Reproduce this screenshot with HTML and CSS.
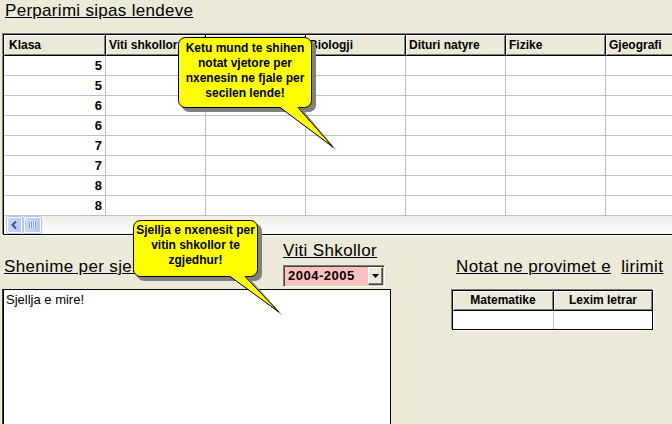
FILE: index.html
```html
<!DOCTYPE html>
<html>
<head>
<meta charset="utf-8">
<link rel="stylesheet" href="styles.css">
</head>
<body>
<div class="page">
  <h1 class="title">Perparimi sipas lendeve</h1>

  <div class="grid">
    <div class="row head">
      <div class="hc k">Klasa</div>
      <div class="hc">Viti shkollor</div>
      <div class="hc">Matematike</div>
      <div class="hc">Biologji</div>
      <div class="hc">Dituri natyre</div>
      <div class="hc">Fizike</div>
      <div class="hc">Gjeografi</div>
      <div class="hc">Histori</div>
    </div>
    <div class="row"><div class="cell k">5</div><div class="cell"></div><div class="cell"></div><div class="cell"></div><div class="cell"></div><div class="cell"></div><div class="cell"></div><div class="cell"></div></div>
    <div class="row"><div class="cell k">5</div><div class="cell"></div><div class="cell"></div><div class="cell"></div><div class="cell"></div><div class="cell"></div><div class="cell"></div><div class="cell"></div></div>
    <div class="row"><div class="cell k">6</div><div class="cell"></div><div class="cell"></div><div class="cell"></div><div class="cell"></div><div class="cell"></div><div class="cell"></div><div class="cell"></div></div>
    <div class="row"><div class="cell k">6</div><div class="cell"></div><div class="cell"></div><div class="cell"></div><div class="cell"></div><div class="cell"></div><div class="cell"></div><div class="cell"></div></div>
    <div class="row"><div class="cell k">7</div><div class="cell"></div><div class="cell"></div><div class="cell"></div><div class="cell"></div><div class="cell"></div><div class="cell"></div><div class="cell"></div></div>
    <div class="row"><div class="cell k">7</div><div class="cell"></div><div class="cell"></div><div class="cell"></div><div class="cell"></div><div class="cell"></div><div class="cell"></div><div class="cell"></div></div>
    <div class="row"><div class="cell k">8</div><div class="cell"></div><div class="cell"></div><div class="cell"></div><div class="cell"></div><div class="cell"></div><div class="cell"></div><div class="cell"></div></div>
    <div class="row"><div class="cell k">8</div><div class="cell"></div><div class="cell"></div><div class="cell"></div><div class="cell"></div><div class="cell"></div><div class="cell"></div><div class="cell"></div></div>
    <div class="hscroll">
      <span class="sb-btn">
        <svg width="13" height="14" viewBox="0 0 13 14"><path d="M8 3.5 L4.5 7 L8 10.5" fill="none" stroke="#3D5287" stroke-width="2"/></svg>
      </span>
      <span class="sb-thumb">
        <svg width="15" height="14" viewBox="0 0 15 14"><g stroke="#7F9BE0" stroke-width="1"><path d="M4.5 4 V10"/><path d="M6.5 4 V10"/><path d="M8.5 4 V10"/><path d="M10.5 4 V10"/></g><g stroke="#F2F6FF" stroke-width="1"><path d="M5.5 4 V10"/><path d="M7.5 4 V10"/><path d="M9.5 4 V10"/></g></svg>
      </span>
    </div>
  </div>

  <div class="bottom">
    <div class="left">
      <div class="left-top">
        <div class="label notes-label">Shenime per sjelljen</div>
        <div class="year">
          <div class="label">Viti Shkollor</div>
          <div class="combo">
            <span class="combo-text">2004-2005</span>
            <span class="combo-btn"><svg width="7" height="4" viewBox="0 0 7 4"><path d="M0 0 H7 L3.5 4 Z" fill="#000"/></svg></span>
          </div>
        </div>
      </div>
      <div class="notes">Sjellja e mire!</div>
    </div>
    <div class="right">
      <div class="label exam-label"><span class="u">Notat ne provimet e</span>&nbsp; <span class="u">lirimit</span></div>
      <div class="exam-grid">
        <div class="erow ehead"><div class="ec">Matematike</div><div class="ec">Lexim letrar</div></div>
        <div class="erow"><div class="ec"></div><div class="ec"></div></div>
      </div>
    </div>
  </div>

  <div class="callout callout-1">
    <svg class="bubble" width="180" height="130" viewBox="0 0 180 130">
      <rect x="4" y="4" width="134" height="71" rx="7" fill="#808080"/>
      <polygon points="106,72 159,114 124,72" fill="#808080"/>
      <rect x="0.5" y="0.5" width="133" height="70" rx="7" fill="#FFFF00" stroke="#000"/>
      <polygon points="102,70 155,110 120,70" fill="#FFFF00"/>
      <path d="M102 70.5 L155 110 L120 70.5" fill="none" stroke="#000" stroke-width="1"/>
    </svg>
    <p class="callout-text">Ketu mund te shihen<br>notat vjetore per<br>nxenesin ne fjale per<br>secilen lende!</p>
  </div>

  <div class="callout callout-2">
    <svg class="bubble" width="170" height="110" viewBox="0 0 170 110">
      <rect x="4" y="4" width="125" height="57" rx="7" fill="#808080"/>
      <polygon points="101,58 150,96 116,58" fill="#808080"/>
      <rect x="0.5" y="0.5" width="124" height="56" rx="7" fill="#FFFF00" stroke="#000"/>
      <polygon points="97,56 146,92 112,56" fill="#FFFF00"/>
      <path d="M97 56.5 L146 92 L112 56.5" fill="none" stroke="#000" stroke-width="1"/>
    </svg>
    <p class="callout-text">Sjellja e nxenesit per<br>vitin shkollor te<br>zgjedhur!</p>
  </div>
</div>
</body>
</html>
```

FILE: styles.css
```css
html, body {
  margin: 0;
  padding: 0;
  background: #ECE9D8;
  overflow: hidden;
}

body {
  font-family: "Liberation Sans", Arial, sans-serif;
  color: #000;
}

.page {
  position: relative;
  width: 672px;
  height: 424px;
  overflow: hidden;
}

.title {
  margin: 2px 0 0 5px;
  font-size: 17px;
  font-weight: normal;
  line-height: 18px;
  letter-spacing: 0.3px;
  text-decoration: underline;
}

/* main grid */
.grid {
  margin: 14px 0 0 3px;
  width: 720px;
  border: 1px solid #000;
  border-right: none;
  background: #fff;
  box-shadow: -1px -1px 0 #808080, 0 1px 0 #fff;
}

.row {
  display: flex;
}

.hc, .cell {
  flex: 0 0 100px;
  box-sizing: border-box;
  font-size: 12px;
  font-weight: bold;
  white-space: nowrap;
  overflow: hidden;
}

.hc {
  height: 21px;
  line-height: 20px;
  padding-left: 3px;
  background: #ECE9D8;
  border-right: 1px solid #000;
  border-bottom: 1px solid #000;
  box-shadow: inset 1px 1px 0 #fff, inset -1px -1px 0 #808080;
}

.hc.k {
  flex-basis: 102px;
  padding-left: 5px;
}

.cell {
  height: 20px;
  line-height: 19px;
  border-right: 1px solid #C0C0C0;
  border-bottom: 1px solid #C0C0C0;
}

.cell.k {
  flex-basis: 102px;
  text-align: right;
  padding-right: 3px;
  font-size: 13px;
}

.hscroll {
  height: 18px;
  display: flex;
  align-items: center;
  padding-left: 3px;
  gap: 1px;
  background: linear-gradient(#EEEDE5, #FDFDFA);
}

.sb-btn, .sb-thumb {
  display: flex;
  box-sizing: border-box;
  height: 16px;
  border: 1px solid #fff;
  border-radius: 2px;
  background: linear-gradient(90deg, #C9D8FB, #B4C8F6);
  box-shadow: 0 0 0 1px #B5C7EE;
}

.sb-btn { width: 15px; }
.sb-thumb { width: 17px; margin-left: 1px; }

/* bottom section */
.bottom {
  display: flex;
}

.left {
  margin-left: 3px;
  width: 388px;
}

.left-top {
  display: flex;
  justify-content: space-between;
  height: 52px;
}

.label {
  font-size: 17px;
  line-height: 18px;
  letter-spacing: 0.35px;
  text-decoration: underline;
  white-space: nowrap;
}

.notes-label {
  margin-top: 23px;
  margin-left: 1px;
}

.year {
  margin-top: 7px;
  margin-right: 6px;
  width: 102px;
}

.combo {
  margin-top: 5px;
  height: 22px;
  box-sizing: border-box;
  display: flex;
  align-items: center;
  border: 1px solid;
  border-color: #808080 #fff #fff #808080;
  box-shadow: inset 1px 1px 0 #404040, inset -1px -1px 0 #D4D0C8;
  background: #FFC0C0;
  padding: 1px 1px 1px 2px;
}

.combo-text {
  flex: 1;
  font-size: 13px;
  font-weight: bold;
  letter-spacing: 0.5px;
  line-height: 16px;
  padding-left: 2px;
}

.combo-btn {
  width: 15px;
  height: 18px;
  box-sizing: border-box;
  display: flex;
  align-items: center;
  justify-content: center;
  background: #ECE9D8;
  border: 1px solid;
  border-color: #fff #404040 #404040 #fff;
  box-shadow: inset -1px -1px 0 #808080;
}

.notes {
  margin-top: 2px;
  height: 150px;
  box-sizing: border-box;
  border: 1px solid #000;
  box-shadow: -1px 0 0 #404040;
  background: #fff;
  padding: 2px 2px;
  font-size: 13px;
  line-height: 16px;
}

.right {
  margin-left: 61px;
}

.exam-label {
  margin-top: 23px;
  margin-left: 4px;
  text-decoration: none;
}

.exam-label .u {
  text-decoration: underline;
}

.exam-grid {
  margin-top: 14px;
  width: 199px;
  border: 1px solid #000;
  background: #fff;
  box-shadow: -1px -1px 0 #808080, 1px 1px 0 #fff;
}

.erow {
  display: flex;
}

.ec {
  box-sizing: border-box;
  height: 18px;
  flex: 0 0 101px;
  border-right: 1px solid #C0C0C0;
  font-size: 12px;
  font-weight: bold;
  text-align: center;
  line-height: 19px;
}

.ec + .ec {
  flex-basis: 98px;
  border-right: none;
}

.ehead .ec {
  height: 20px;
  background: #ECE9D8;
  border-right: 1px solid #000;
  border-bottom: 1px solid #000;
  box-shadow: inset 1px 1px 0 #fff, inset -1px -1px 0 #808080;
}

.ehead .ec + .ec {
  border-right: none;
}

/* callouts */
.callout {
  position: absolute;
}

.callout-1 {
  left: 178px;
  top: 37px;
  width: 134px;
  height: 71px;
}

.callout-2 {
  left: 133px;
  top: 220px;
  width: 125px;
  height: 57px;
}

.bubble {
  position: absolute;
  left: 0;
  top: 0;
  overflow: visible;
}

.callout-text {
  position: relative;
  margin: 0;
  padding-top: 4px;
  text-align: center;
  font-size: 12px;
  font-weight: bold;
  line-height: 15px;
  white-space: nowrap;
}

.callout-2 .callout-text {
  padding-top: 3px;
}
```
